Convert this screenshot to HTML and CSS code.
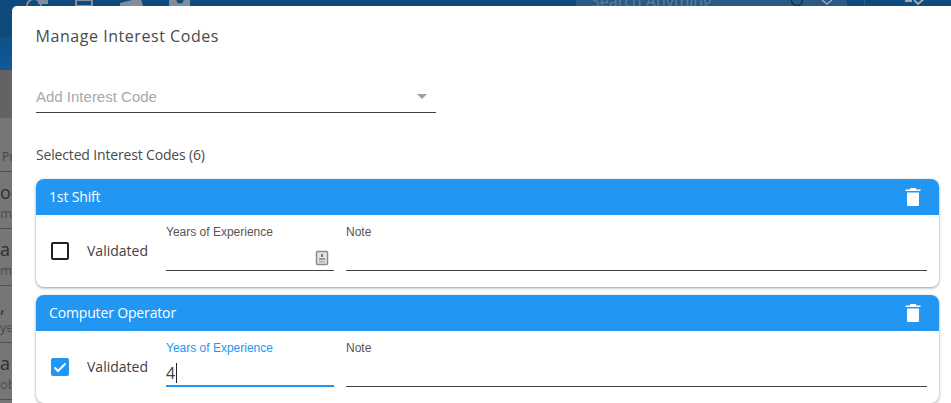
FILE: index.html
```html
<!DOCTYPE html>
<html lang="en">
<head>
<meta charset="utf-8">
<title>Manage Interest Codes</title>
<link rel="stylesheet" href="styles.css">
</head>
<body>
<div class="backdrop">
  <header class="topbar">
    <svg class="nav-icons" width="190" height="6" viewBox="0 0 190 6"><circle cx="34" cy="6" r="7" fill="none" stroke="#7f8d9c" stroke-width="2"/><rect x="38" y="0" width="10" height="4" fill="#7f8d9c"/><rect x="76" y="0" width="16" height="6" fill="none" stroke="#7f8d9c" stroke-width="2"/><path d="M120 3l12-3h4v-1h5l2 7H120z" fill="#7f8d9c"/><rect x="169" y="0" width="21" height="6" fill="#7f8d9c"/><circle cx="180" cy="0" r="3.500" fill="#0f4a7c"/></svg>
    <div class="search">
      <span class="search-text">Search Anything</span>
      <svg class="search-icons" width="60" height="6" viewBox="0 0 60 6"><circle cx="6" cy="0" r="5.500" fill="none" stroke="#0f3556" stroke-width="1.500"/><path d="M31 0l5 4 5-4" fill="none" stroke="#9aa9b6" stroke-width="1.500"/></svg>
    </div>
    <span class="divider"></span>
    <svg class="tick" width="22" height="6" viewBox="0 0 22 6"><path d="M0 1h7" stroke="#9aa9b6" stroke-width="2"/><path d="M9 0l4 4 7-6" fill="none" stroke="#9aa9b6" stroke-width="2"/></svg>
  </header>
  <div class="subbar"></div>
  <div class="band"></div>
  <div class="list">
    <div class="row row-head">Pr</div>
    <div class="row"><span>oc</span><small>me</small></div>
    <div class="row"><span>a S</span><small>me</small></div>
    <div class="row"><span>,</span><small>ye</small></div>
    <div class="row"><span>a S</span><small>ob</small></div>
  </div>
</div>
<main class="dialog">
  <h1 class="title">Manage Interest Codes</h1>
  <div class="select">
    <span class="select-text">Add Interest Code</span>
    <span class="caret"></span>
  </div>
  <p class="selected">Selected Interest Codes (6)</p>
  <section class="card">
    <div class="card-head">
      <span>1st Shift</span>
      <svg class="trash" width="24" height="24" viewBox="0 0 24 24"><path fill="#fff" d="M6 19.500c0 1 .5 1.500 1.500 1.500h9c1 0 1.500-.5 1.500-1.500V7.500H6zM19.500 4.500H15.500l-1-1.500h-5l-1 1.500H4.500V6h15z"/></svg>
    </div>
    <div class="card-body">
      <span class="check"></span>
      <span class="validated">Validated</span>
      <div class="field years">
        <label class="label">Years of Experience</label>
        <div class="value">
          <svg class="contact" width="14" height="16" viewBox="0 0 14 16"><rect x="1.500" y="1.500" width="11" height="13" rx="1" fill="#e4e4e4" stroke="#8a8a8a" stroke-width="1.500"/><rect x="6" y="4" width="2" height="3" fill="#777"/><rect x="4" y="8" width="6" height="2" fill="#999"/><rect x="4" y="11" width="6" height="1.500" fill="#aaa"/></svg>
        </div>
      </div>
      <div class="field note">
        <label class="label">Note</label>
        <div class="value"></div>
      </div>
    </div>
  </section>
  <section class="card">
    <div class="card-head">
      <span>Computer Operator</span>
      <svg class="trash" width="24" height="24" viewBox="0 0 24 24"><path fill="#fff" d="M6 19.500c0 1 .5 1.500 1.500 1.500h9c1 0 1.500-.5 1.500-1.500V7.500H6zM19.500 4.500H15.500l-1-1.500h-5l-1 1.500H4.500V6h15z"/></svg>
    </div>
    <div class="card-body">
      <span class="check checked"><svg width="18" height="18" viewBox="0 0 18 18"><path d="M3.500 9.500l3.500 3.500 7.500-7.500" fill="none" stroke="#fff" stroke-width="2"/></svg></span>
      <span class="validated">Validated</span>
      <div class="field years focus">
        <label class="label">Years of Experience</label>
        <div class="value"><span class="typed">4</span></div>
      </div>
      <div class="field note">
        <label class="label">Note</label>
        <div class="value"></div>
      </div>
    </div>
  </section>
</main>
</body>
</html>
```
FILE: styles.css
```css
* { box-sizing: border-box; }
html, body { margin: 0; height: 100%; overflow: hidden; }
body { width: 951px; height: 403px; background: #6b6b6b; position: relative; font-family: "Open Sans", sans-serif; color: #3d3d3d; }
.backdrop { height: 403px; display: flex; flex-direction: column; }
.topbar { height: 38px; background: #0f4a7c; display: flex; align-items: flex-start; flex: none; overflow: hidden; }
.nav-icons { flex: none; margin-right: 386px; }
.search { width: 271px; height: 38px; margin-top: -14px; padding-left: 15px; background: #285a85; border-radius: 10px; color: #5d7f9d; font-size: 16px; line-height: 24px; display: flex; flex: none; position: relative; }
.search-text { flex: 1; white-space: nowrap; margin-top: 3px; }
.search-icons { position: absolute; top: 14px; left: 215px; }
.divider { width: 1px; height: 6px; margin-left: 17px; background: #2a5b86; }
.tick { margin-left: 40px; }
.subbar { height: 32px; flex: none; background: linear-gradient(#10508a, #115a98); border-top: 1px solid #15558a; }
.band { height: 48px; flex: none; background: #636363; }
.list { flex: 1; background: #767676; overflow: hidden; }
.row { height: 57px; border-bottom: 1px solid #505050; display: flex; flex-direction: column; color: #2e2e2e; font-size: 18px; line-height: 24px; white-space: nowrap; padding-top: 8px; overflow: hidden; }
.row small { font-size: 13px; line-height: 18px; color: #4c4c4c; }
.row-head { height: 54px; font-size: 12px; padding: 27px 0 0 2px; color: #444; }
.dialog { position: absolute; left: 12px; top: 6px; width: 939px; height: 397px; background: #fff; border-radius: 5px 0 0 0; padding: 18px 12px 0 24px; overflow: hidden; }
.title { margin: 0; font-size: 16px; font-weight: 400; line-height: 24px; letter-spacing: .55px; color: #4a4a4a; text-indent: -.5px; }
.select { width: 400px; height: 32px; margin-top: 33px; border-bottom: 1px solid #424242; display: flex; justify-content: space-between; align-items: center; padding-right: 9px; }
.select-text { font-family: "Liberation Sans", sans-serif; font-size: 15px; color: #a8a8a8; }
.caret { width: 0; height: 0; border: 5px solid transparent; border-top-color: #9e9e9e; border-bottom: 0; }
.selected { margin: 32px 0 0; font-size: 14px; line-height: 20px; letter-spacing: -.16px; color: #4a4a4a; }
.card { margin: 14px 0 8px; width: 903px; height: 108px; border-radius: 8px; background: #fff; box-shadow: 0 1px 3px rgba(0,0,0,.4); overflow: hidden; }
.card + .card { margin-top: 0; }
.card-head { height: 36px; background: #2196f3; color: #fff; font-size: 14px; font-weight: 500; letter-spacing: -.15px; display: flex; justify-content: space-between; align-items: center; padding: 0 14px 2px 13px; }
.trash { margin-top: 2px; }
.card-body { display: flex; align-items: flex-start; padding-left: 15px; }
.check { width: 18px; height: 18px; margin-top: 27px; border: 2px solid #212121; border-radius: 2px; flex: none; display: flex; align-items: center; justify-content: center; }
.check.checked { background: #2196f3; border: 0; }
.validated { width: 97px; margin-top: 26px; padding-left: 18px; font-size: 14px; line-height: 20px; color: #424242; flex: none; }
.field { display: flex; flex-direction: column; padding-top: 10px; }
.years { width: 168px; margin-right: 12px; }
.note { width: 581px; }
.label { font-family: "Liberation Sans", sans-serif; font-size: 12px; line-height: 14px; color: #555; }
.value { height: 32px; border-bottom: 1px solid #424242; display: flex; align-items: center; justify-content: flex-end; padding-top: 6px; }
.contact { margin-right: 5px; }
.focus .label { color: #2196f3; }
.focus .value { border-bottom: 2px solid #2196f3; justify-content: flex-start; padding-top: 5px; }
.typed { font-size: 16px; line-height: 20px; color: #424242; border-right: 1px solid #212121; padding-right: 1px; }
```
